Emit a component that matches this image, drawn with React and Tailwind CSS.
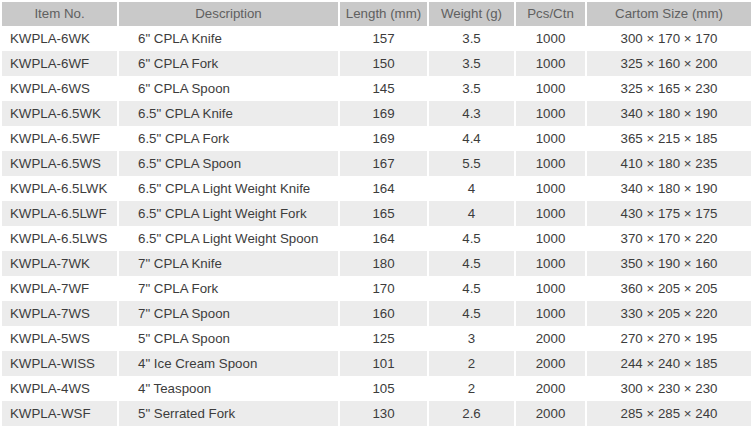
const rows = [
  ["KWPLA-6WK", '6" CPLA Knife', "157", "3.5", "1000", "300 × 170 × 170"],
  ["KWPLA-6WF", '6" CPLA Fork', "150", "3.5", "1000", "325 × 160 × 200"],
  ["KWPLA-6WS", '6" CPLA Spoon', "145", "3.5", "1000", "325 × 165 × 230"],
  ["KWPLA-6.5WK", '6.5" CPLA Knife', "169", "4.3", "1000", "340 × 180 × 190"],
  ["KWPLA-6.5WF", '6.5" CPLA Fork', "169", "4.4", "1000", "365 × 215 × 185"],
  ["KWPLA-6.5WS", '6.5" CPLA Spoon', "167", "5.5", "1000", "410 × 180 × 235"],
  ["KWPLA-6.5LWK", '6.5" CPLA Light Weight Knife', "164", "4", "1000", "340 × 180 × 190"],
  ["KWPLA-6.5LWF", '6.5" CPLA Light Weight Fork', "165", "4", "1000", "430 × 175 × 175"],
  ["KWPLA-6.5LWS", '6.5" CPLA Light Weight Spoon', "164", "4.5", "1000", "370 × 170 × 220"],
  ["KWPLA-7WK", '7" CPLA Knife', "180", "4.5", "1000", "350 × 190 × 160"],
  ["KWPLA-7WF", '7" CPLA Fork', "170", "4.5", "1000", "360 × 205 × 205"],
  ["KWPLA-7WS", '7" CPLA Spoon', "160", "4.5", "1000", "330 × 205 × 220"],
  ["KWPLA-5WS", '5" CPLA Spoon', "125", "3", "2000", "270 × 270 × 195"],
  ["KWPLA-WISS", '4" Ice Cream Spoon', "101", "2", "2000", "244 × 240 × 185"],
  ["KWPLA-4WS", '4" Teaspoon', "105", "2", "2000", "300 × 230 × 230"],
  ["KWPLA-WSF", '5" Serrated Fork', "130", "2.6", "2000", "285 × 285 × 240"],
];

const headers = ["Item No.", "Description", "Length (mm)", "Weight (g)", "Pcs/Ctn", "Cartom Size (mm)"];

export default function App() {
  return (
    <div className="w-[753px] h-[430px] bg-white overflow-hidden pt-[2px]" style={{ fontFamily: '"Liberation Sans", Arial, sans-serif' }}>
      <table className="w-[753px] table-fixed border-separate [border-spacing:2px_0] text-[13.3px]">
        <colgroup>
          <col className="w-[115px]" />
          <col className="w-[219px]" />
          <col className="w-[87px]" />
          <col className="w-[85px]" />
          <col className="w-[69px]" />
          <col className="w-[164px]" />
        </colgroup>
        <thead>
          <tr className="h-[24px]">
            {headers.map((h) => (
              <th key={h} className="bg-[#c9c9c9] text-[#606060] font-normal text-center p-0 align-middle">
                {h}
              </th>
            ))}
          </tr>
        </thead>
        <tbody>
          {rows.map((r, i) => (
            <tr key={r[0]} className={`h-[25px] ${i % 2 === 1 ? "[&>td]:bg-[#ececec]" : "[&>td]:bg-white"}`}>
              <td className="text-[#3c3c3c] text-left pl-2 p-0 whitespace-nowrap">{r[0]}</td>
              <td className="text-[#3c3c3c] text-left pl-[19px] p-0 whitespace-nowrap">{r[1]}</td>
              <td className="text-[#3c3c3c] text-center p-0">{r[2]}</td>
              <td className="text-[#3c3c3c] text-center p-0">{r[3]}</td>
              <td className="text-[#3c3c3c] text-center p-0">{r[4]}</td>
              <td className="text-[#3c3c3c] text-center p-0 whitespace-nowrap">{r[5]}</td>
            </tr>
          ))}
        </tbody>
      </table>
    </div>
  );
}
